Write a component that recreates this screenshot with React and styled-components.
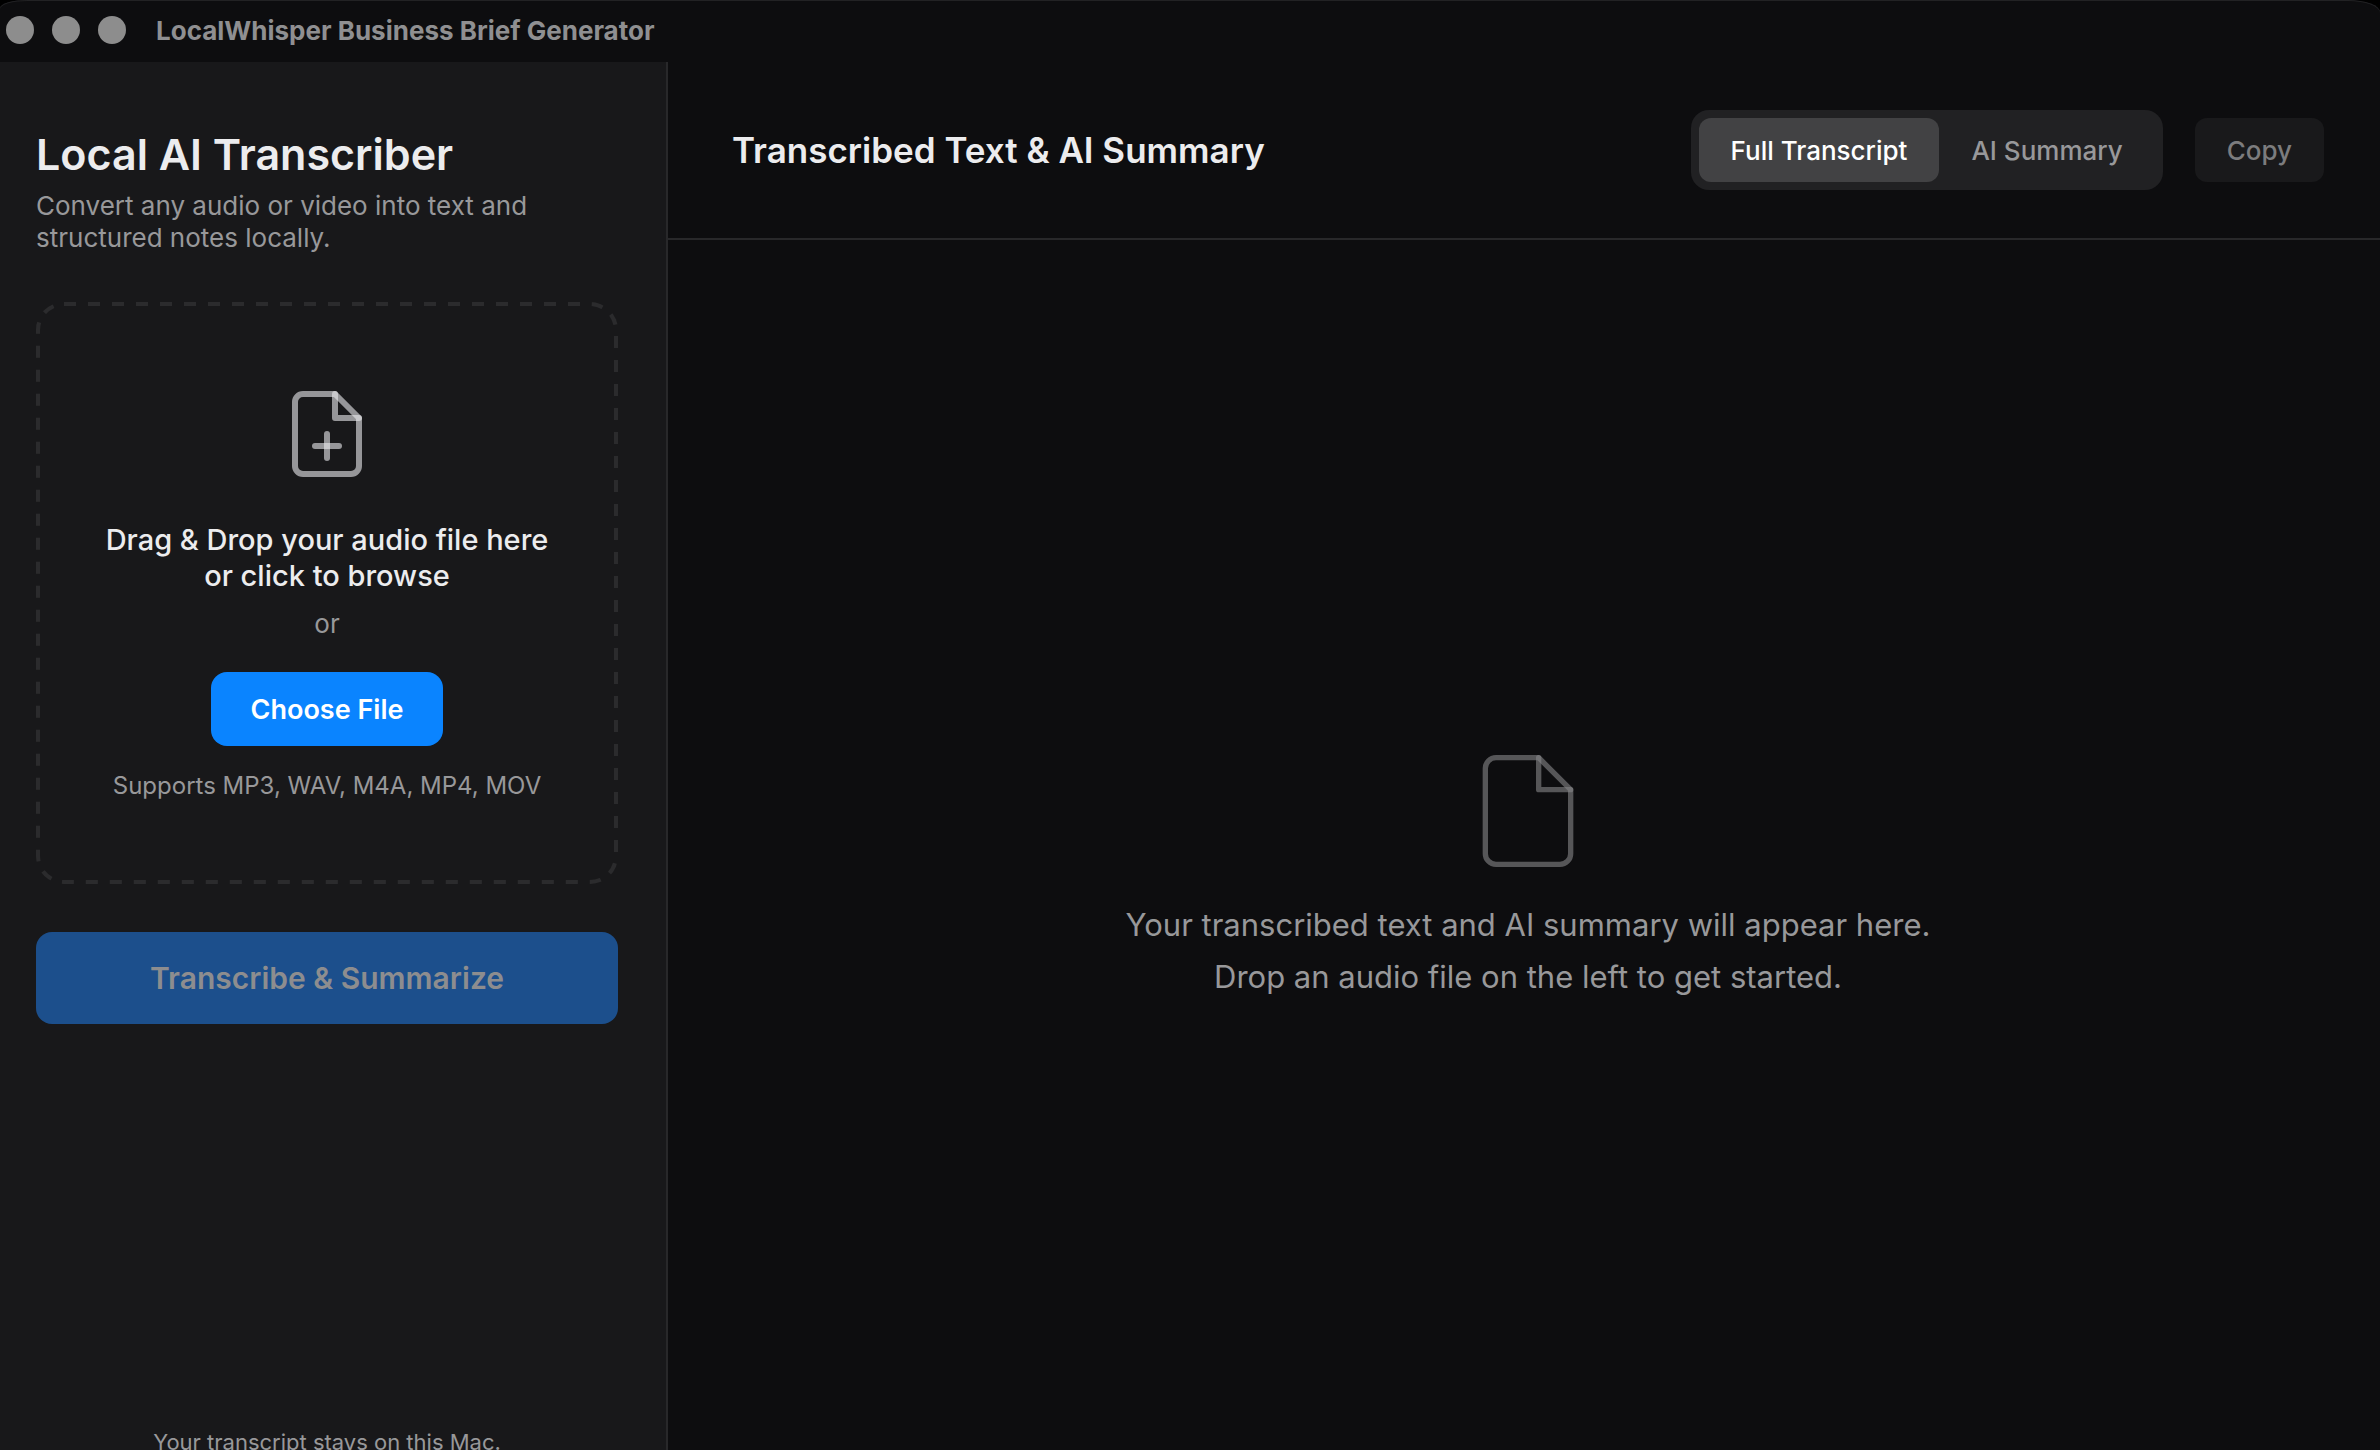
import React, { useState } from "react";
import styled, { createGlobalStyle } from "styled-components";

const text_main = "#ececee";
const text_muted = "#98989a";
const surface_side = "#18181a";
const surface_main = "#0d0d0f";
const line = "#28282a";
const accent = "#0a84ff";

const dashedFrame = `url("data:image/svg+xml,%3Csvg xmlns='http://www.w3.org/2000/svg' width='100%25' height='100%25'%3E%3Crect width='100%25' height='100%25' rx='28' fill='none' stroke='%232b2b2d' stroke-width='8' stroke-dasharray='12 12'/%3E%3C/svg%3E")`;

const GlobalStyle = createGlobalStyle`
  * {
    box-sizing: border-box;
  }
  body {
    margin: 0;
    background: #000;
    color: ${text_main};
    font-family: Inter, "Liberation Sans", sans-serif;
    -webkit-font-smoothing: antialiased;
  }
  button {
    border: 0;
    font-family: inherit;
    cursor: pointer;
  }
  h1, h2, p {
    margin: 0;
  }
`;

const Window = styled.div`
  display: flex;
  flex-direction: column;
  height: 100vh;
  overflow: hidden;
  background: ${surface_main};
  border-radius: 28px 32px 0 0 / 8px 12px 0 0;
  box-shadow: inset 0 1px 0 #222224;
`;

const TitleBar = styled.header`
  display: flex;
  flex: none;
  align-items: center;
  gap: 18px;
  height: 62px;
  padding: 0 6px 2px;
`;

const Light = styled.span`
  width: 28px;
  height: 28px;
  border-radius: 50%;
  background: #8d8d8d;
`;

const WindowTitle = styled.span`
  margin-left: 12px;
  font-size: 26px;
  font-weight: 700;
  color: #8f8f91;
`;

const Body = styled.div`
  display: flex;
  flex: 1;
  min-height: 0;
`;

const Sidebar = styled.aside`
  display: flex;
  flex: none;
  flex-direction: column;
  width: 668px;
  padding: 62px 48px 0 36px;
  background: ${surface_side};
  border-right: 2px solid ${line};
`;

const Title = styled.h1`
  font-size: 43px;
  line-height: 60px;
  font-weight: 600;
`;

const Subtitle = styled.p`
  margin-top: 6px;
  font-size: 26px;
  line-height: 32px;
  color: ${text_muted};
`;

const DropZone = styled.div`
  display: flex;
  flex-direction: column;
  align-items: center;
  justify-content: center;
  aspect-ratio: 1;
  margin: 48px 0;
  padding-top: 2px;
  border-radius: 28px;
  background-image: ${dashedFrame};
  text-align: center;
`;

const DropText = styled.p`
  margin-top: 40px;
  font-size: 29px;
  line-height: 36px;
  font-weight: 500;
`;

const Or = styled.span`
  margin: 14px 0 32px;
  font-size: 26px;
  line-height: 32px;
  color: ${text_muted};
`;

const ChooseButton = styled.button`
  height: 74px;
  padding: 0 40px;
  border-radius: 16px;
  background: ${accent};
  color: #fff;
  font-size: 27px;
  font-weight: 600;
`;

const Formats = styled.p`
  margin-top: 24px;
  font-size: 24px;
  line-height: 32px;
  color: ${text_muted};
`;

const SubmitButton = styled.button`
  flex: none;
  height: 92px;
  border-radius: 16px;
  background: #1c4f8c;
  color: #8d8d8f;
  font-size: 30px;
  font-weight: 600;
`;

const Footnote = styled.p`
  flex: none;
  margin-top: auto;
  margin-bottom: -10px;
  font-size: 22px;
  line-height: 36px;
  text-align: center;
  color: ${text_muted};
`;

const Main = styled.main`
  display: flex;
  flex: 1;
  flex-direction: column;
  min-width: 0;
`;

const Toolbar = styled.div`
  display: flex;
  flex: none;
  align-items: center;
  gap: 32px;
  padding: 48px 56px 48px 64px;
  border-bottom: 2px solid ${line};
`;

const Heading = styled.h2`
  flex: 1;
  font-size: 35px;
  line-height: 44px;
  font-weight: 600;
`;

const Segments = styled.div`
  display: flex;
  padding: 8px;
  border-radius: 18px;
  background: #212123;
`;

const Segment = styled.button`
  height: 64px;
  padding: 0 32px;
  border-radius: 12px;
  background: ${({ $active }) => ($active ? "#424244" : "transparent")};
  color: ${({ $active }) => ($active ? "#fff" : text_muted)};
  font-size: 26px;
  font-weight: 500;
`;

const CopyButton = styled.button`
  height: 64px;
  padding: 0 32px;
  border-radius: 12px;
  background: #19191b;
  color: #7c7c7e;
  font-size: 26px;
  font-weight: 500;
`;

const EmptyState = styled.div`
  display: flex;
  flex: 1;
  flex-direction: column;
  align-items: center;
  justify-content: center;
  padding: 60px 0 0 8px;
  font-size: 31px;
  line-height: 52px;
  text-align: center;
  color: ${text_muted};
`;

const EmptyIcon = styled.div`
  height: 128px;
  margin-bottom: 24px;
  opacity: 0.55;
`;

const FileIcon = ({ size, strokeWidth, plus }) => (
  <svg
    width={size}
    height={size}
    viewBox="0 0 24 24"
    fill="none"
    stroke="rgba(235, 235, 238, 0.6)"
    strokeWidth={strokeWidth}
    strokeLinecap="round"
    strokeLinejoin="round"
    aria-hidden="true"
  >
    <path d="M14 2H6a2 2 0 0 0-2 2v16a2 2 0 0 0 2 2h12a2 2 0 0 0 2-2V8z" />
    <polyline points="14 2 14 8 20 8" />
    {plus && (
      <>
        <line x1="12" y1="18" x2="12" y2="12" />
        <line x1="9" y1="15" x2="15" y2="15" />
      </>
    )}
  </svg>
);

const tabs = ["Full Transcript", "AI Summary"];

const App = () => {
  const [active, setActive] = useState(tabs[0]);

  return (
    <>
      <GlobalStyle />
      <Window>
        <TitleBar>
          <Light />
          <Light />
          <Light />
          <WindowTitle>LocalWhisper Business Brief Generator</WindowTitle>
        </TitleBar>
        <Body>
          <Sidebar>
            <Title>Local AI Transcriber</Title>
            <Subtitle>
              Convert any audio or video into text and
              <br />
              structured notes locally.
            </Subtitle>
            <DropZone>
              <FileIcon size={96} strokeWidth={1.5} plus />
              <DropText>
                Drag &amp; Drop your audio file here
                <br />
                or click to browse
              </DropText>
              <Or>or</Or>
              <ChooseButton type="button">Choose File</ChooseButton>
              <Formats>Supports MP3, WAV, M4A, MP4, MOV</Formats>
            </DropZone>
            <SubmitButton type="button" disabled>
              Transcribe &amp; Summarize
            </SubmitButton>
            <Footnote>Your transcript stays on this Mac.</Footnote>
          </Sidebar>
          <Main>
            <Toolbar>
              <Heading>Transcribed Text &amp; AI Summary</Heading>
              <Segments role="tablist">
                {tabs.map((tab) => (
                  <Segment
                    key={tab}
                    type="button"
                    role="tab"
                    aria-selected={tab === active}
                    $active={tab === active}
                    onClick={() => setActive(tab)}
                  >
                    {tab}
                  </Segment>
                ))}
              </Segments>
              <CopyButton type="button" disabled>
                Copy
              </CopyButton>
            </Toolbar>
            <EmptyState>
              <EmptyIcon>
                <FileIcon size={128} strokeWidth={1} />
              </EmptyIcon>
              <p>Your transcribed text and AI summary will appear here.</p>
              <p>Drop an audio file on the left to get started.</p>
            </EmptyState>
          </Main>
        </Body>
      </Window>
    </>
  );
};

export default App;
